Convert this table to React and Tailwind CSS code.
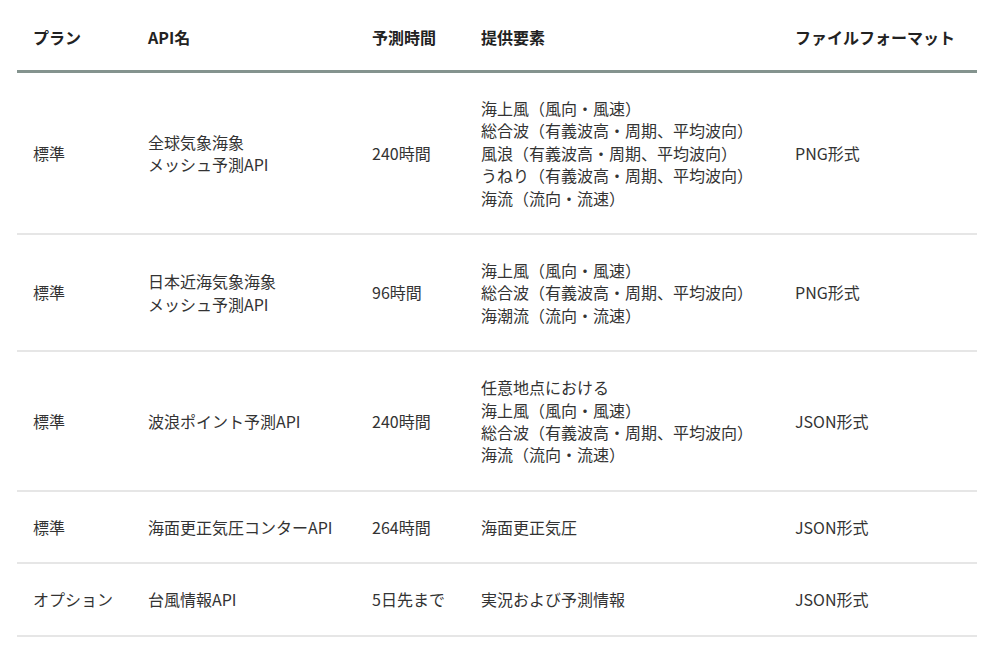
import React from "react";

const rows = [
  {
    plan: "標準",
    api: ["全球気象海象", "メッシュ予測API"],
    time: "240時間",
    items: [
      "海上風（風向・風速）",
      "総合波（有義波高・周期、平均波向）",
      "風浪（有義波高・周期、平均波向）",
      "うねり（有義波高・周期、平均波向）",
      "海流（流向・流速）",
    ],
    fmt: "PNG形式",
  },
  {
    plan: "標準",
    api: ["日本近海気象海象", "メッシュ予測API"],
    time: "96時間",
    items: ["海上風（風向・風速）", "総合波（有義波高・周期、平均波向）", "海潮流（流向・流速）"],
    fmt: "PNG形式",
  },
  {
    plan: "標準",
    api: ["波浪ポイント予測API"],
    time: "240時間",
    items: ["任意地点における", "海上風（風向・風速）", "総合波（有義波高・周期、平均波向）", "海流（流向・流速）"],
    fmt: "JSON形式",
  },
  {
    plan: "標準",
    api: ["海面更正気圧コンターAPI"],
    time: "264時間",
    items: ["海面更正気圧"],
    fmt: "JSON形式",
  },
  {
    plan: "オプション",
    api: ["台風情報API"],
    time: "5日先まで",
    items: ["実況および予測情報"],
    fmt: "JSON形式",
  },
];

export default function App() {
  return (
    <div
      className="w-[1003px] h-[656px] bg-white pl-[17px] pr-[26px]"
      style={{ fontFamily: '"Noto Sans CJK JP", "Noto Sans", sans-serif' }}
    >
      <table className="w-[960px] table-fixed border-collapse text-[16px] leading-[22.4px] text-[#333]">
        <colgroup>
          <col className="w-[115px]" />
          <col className="w-[224px]" />
          <col className="w-[109px]" />
          <col className="w-[314px]" />
          <col className="w-[198px]" />
        </colgroup>
        <thead>
          <tr className="border-b-[3px] border-[#84938e]">
            {["プラン", "API名", "予測時間", "提供要素", "ファイルフォーマット"].map((h) => (
              <th key={h} className="text-left font-bold text-[#222] px-4 pt-[26px] pb-[21.6px]">
                {h}
              </th>
            ))}
          </tr>
        </thead>
        <tbody>
          {rows.map((r, i) => (
            <tr key={i} className="border-b-2 border-[#e6e6e6]">
              <td className="px-4 py-6 align-middle">{r.plan}</td>
              <td className="px-4 py-6 align-middle">
                {r.api.map((a) => (
                  <div key={a}>{a}</div>
                ))}
              </td>
              <td className="px-4 py-6 align-middle">{r.time}</td>
              <td className="px-4 py-6 align-middle">
                {r.items.map((a, j) => (
                  <div key={j}>{a}</div>
                ))}
              </td>
              <td className="px-4 py-6 align-middle">{r.fmt}</td>
            </tr>
          ))}
        </tbody>
      </table>
    </div>
  );
}
